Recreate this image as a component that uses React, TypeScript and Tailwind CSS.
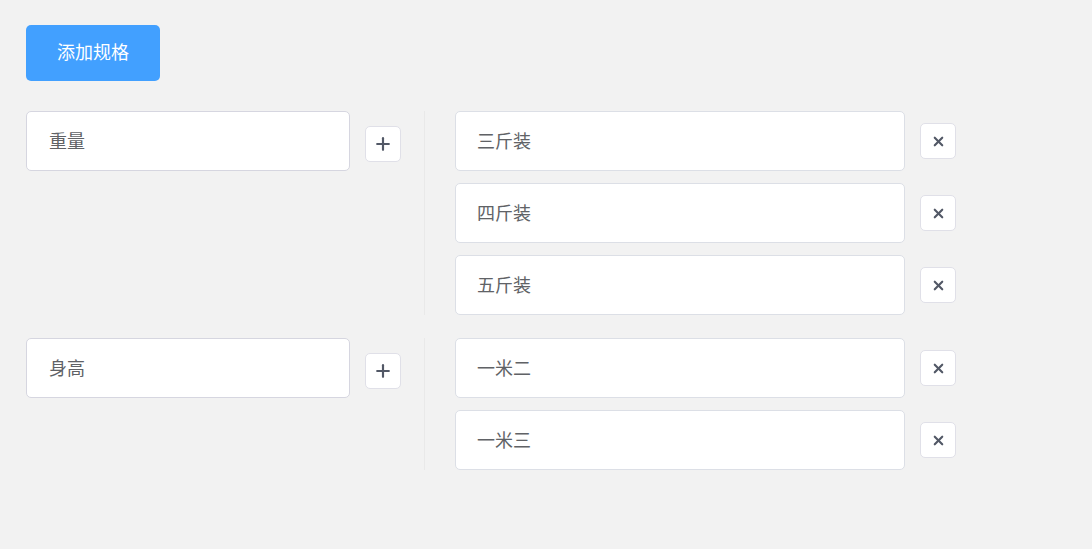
import { Plus, X } from 'lucide-react';

const groups = [
  { name: '重量', values: ['三斤装', '四斤装', '五斤装'] },
  { name: '身高', values: ['一米二', '一米三'] },
];

const font = { fontFamily: '"Noto Sans CJK SC", "Noto Sans", sans-serif' };

export default function App() {
  return (
    <div className="min-h-[549px] bg-[#f2f2f2] pt-[25px] pl-[26px]" style={font}>
      <button className="w-[134px] h-[56px] rounded-[5px] bg-[#42a0ff] text-white text-[18px] pb-[3px]">
        添加规格
      </button>

      <div className="mt-[30px] flex flex-col gap-[23px]">
        {groups.map((g) => (
          <div key={g.name} className="flex">
            <div className="flex items-start w-[398px]">
              <div className="w-[324px] h-[60px] bg-white border border-[#d6d6e0] rounded-[5px] flex items-center pl-[22px] pb-[2px] text-[18px] text-[#606266]">
                {g.name}
              </div>
              <button className="ml-[15px] mt-[15px] w-[36px] h-[36px] bg-white border border-[#e0e0e8] rounded-[5px] flex items-center justify-center text-[#525866]">
                <Plus size={20} strokeWidth={2.6} />
              </button>
            </div>
            <div className="border-l border-[#e9e9e9] pl-[30px] flex flex-col gap-[12px]">
              {g.values.map((v) => (
                <div key={v} className="flex items-center">
                  <div className="w-[450px] h-[60px] bg-white border border-[#dcdfe6] rounded-[5px] flex items-center pl-[21px] pb-[2px] text-[18px] text-[#606266]">
                    {v}
                  </div>
                  <button className="ml-[15px] w-[36px] h-[36px] bg-white border border-[#e0e0e8] rounded-[5px] flex items-center justify-center text-[#525866]">
                    <X size={15} strokeWidth={3.4} />
                  </button>
                </div>
              ))}
            </div>
          </div>
        ))}
      </div>
    </div>
  );
}
